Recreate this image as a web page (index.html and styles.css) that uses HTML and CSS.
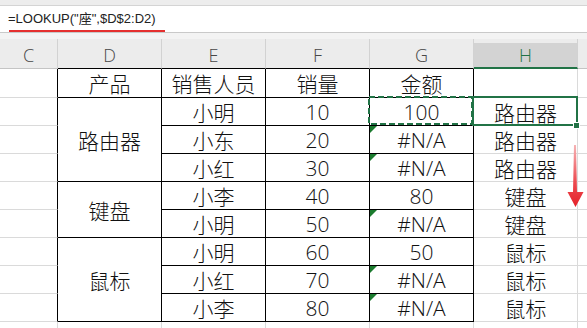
FILE: index.html
```html
<!DOCTYPE html>
<html lang="zh-CN">
<head>
<meta charset="utf-8">
<title>LOOKUP</title>
<link rel="stylesheet" href="styles.css">
</head>
<body>
<div class="app">
  <div class="topstrip"></div>
  <div class="fbar"><span class="formula">=LOOKUP("座",$D$2:D2)</span></div>
  <div class="strip"></div>
  <div class="grid colhead">
    <div class="hc">C</div>
    <div class="hc tb">D</div>
    <div class="hc tb">E</div>
    <div class="hc tb">F</div>
    <div class="hc tb">G</div>
    <div class="hc sel">H</div>
    <div class="hc last"></div>
  </div>
  <div class="grid sheet">
    <div class="c edge"></div>
    <div class="c t">产品</div>
    <div class="c t">销售人员</div>
    <div class="c t">销量</div>
    <div class="c t">金额</div>
    <div class="c"></div>
    <div class="c last"></div>

    <div class="c edge"></div>
    <div class="c t span3">路由器</div>
    <div class="c t">小明</div>
    <div class="c t">10</div>
    <div class="c t">100</div>
    <div class="c">路由器</div>
    <div class="c last"></div>

    <div class="c edge"></div>
    <div class="c t">小东</div>
    <div class="c t">20</div>
    <div class="c t err">#N/A</div>
    <div class="c">路由器</div>
    <div class="c last"></div>

    <div class="c edge"></div>
    <div class="c t">小红</div>
    <div class="c t">30</div>
    <div class="c t err">#N/A</div>
    <div class="c">路由器</div>
    <div class="c last"></div>

    <div class="c edge"></div>
    <div class="c t span2">键盘</div>
    <div class="c t">小李</div>
    <div class="c t">40</div>
    <div class="c t">80</div>
    <div class="c">键盘</div>
    <div class="c last"></div>

    <div class="c edge"></div>
    <div class="c t">小明</div>
    <div class="c t">50</div>
    <div class="c t err">#N/A</div>
    <div class="c">键盘</div>
    <div class="c last"></div>

    <div class="c edge"></div>
    <div class="c t span3">鼠标</div>
    <div class="c t">小明</div>
    <div class="c t">60</div>
    <div class="c t">50</div>
    <div class="c">鼠标</div>
    <div class="c last"></div>

    <div class="c edge"></div>
    <div class="c t">小红</div>
    <div class="c t">70</div>
    <div class="c t err">#N/A</div>
    <div class="c">鼠标</div>
    <div class="c last"></div>

    <div class="c edge"></div>
    <div class="c t">小李</div>
    <div class="c t">80</div>
    <div class="c t err">#N/A</div>
    <div class="c">鼠标</div>
    <div class="c last"></div>

    <div class="c"></div>
    <div class="c"></div>
    <div class="c"></div>
    <div class="c"></div>
    <div class="c"></div>
    <div class="c"></div>
    <div class="c last"></div>

    <svg class="marquee" width="106" height="30" viewBox="0 0 106 30">
      <rect x="1" y="1" width="103" height="27" fill="none" stroke="#217346" stroke-width="2" stroke-dasharray="6 3"/>
    </svg>
    <div class="selbox"></div>
    <div class="handle"></div>
    <svg class="arrow" width="20" height="64" viewBox="0 0 20 64">
      <defs>
        <linearGradient id="ag" x1="0" y1="0" x2="0" y2="1">
          <stop offset="0" stop-color="#f6b3b5"/>
          <stop offset="0.6" stop-color="#ec4a50"/>
          <stop offset="1" stop-color="#e5222a"/>
        </linearGradient>
      </defs>
      <polygon points="8,1 10,1 11,48 17.5,48 9.5,63 1.5,48 7,48" fill="url(#ag)"/>
    </svg>
  </div>
</div>
</body>
</html>
```

FILE: styles.css
```css
html, body {
  margin: 0;
  padding: 0;
  background: #ffffff;
}

.app {
  width: 587px;
  height: 328px;
  overflow: hidden;
  position: relative;
  font-family: "Open Sans", "Noto Sans CJK SC", sans-serif;
}

.topstrip {
  height: 5px;
  background: #ededed;
  border-bottom: 1px solid #d4d4d4;
}

.fbar {
  position: relative;
  height: 26px;
  background: #ffffff;
  border-bottom: 1px solid #c9c9c9;
}

.formula {
  display: block;
  padding-left: 8px;
  line-height: 26px;
  font-family: "Liberation Sans", "Noto Sans CJK SC", sans-serif;
  font-size: 13px;
  color: #222222;
}

.fbar::after {
  content: "";
  position: absolute;
  left: 9px;
  top: 24px;
  width: 156px;
  height: 2px;
  background: #e5302f;
}

.strip {
  height: 6px;
  background: #f3f3f3;
}

.grid {
  display: grid;
  grid-template-columns: 58px repeat(5, 104px) 9px;
}

.colhead {
  height: 30px;
  background: #ececec;
}

.hc {
  box-sizing: border-box;
  height: 30px;
  padding-top: 4px;
  line-height: 25px;
  text-align: center;
  font-family: "Open Sans", "Noto Sans", sans-serif;
  font-weight: 300;
  font-size: 18px;
  color: #474747;
  border-right: 1px solid #d2d2d2;
  border-bottom: 1px solid #c4c4c4;
}

.hc.tb {
  border-bottom-color: #000000;
}

.hc.sel {
  background: linear-gradient(#ececec 4px, #d3d3d3 4px);
  color: #217346;
  border-bottom: 2px solid #217346;
}

.hc.last {
  border-right: none;
}

.sheet {
  position: relative;
  grid-template-rows: 29px repeat(8, 28px) 28px;
}

.c {
  box-sizing: border-box;
  display: flex;
  align-items: center;
  justify-content: center;
  font-size: 21px;
  font-weight: 300;
  color: #111111;
  border-right: 1px solid #dadada;
  border-bottom: 1px solid #dadada;
}

.c.t {
  border-right-color: #000000;
  border-bottom-color: #000000;
}

.c.edge {
  border-right-color: #000000;
}

.c.last {
  border-right: none;
}

.span3 {
  grid-row: span 3;
}

.span2 {
  grid-row: span 2;
}

.err {
  position: relative;
}

.err::before {
  content: "";
  position: absolute;
  left: 0;
  top: 0;
  width: 0;
  height: 0;
  border-top: 7px solid #1b7b2e;
  border-right: 7px solid transparent;
}

.marquee {
  position: absolute;
  left: 368px;
  top: 27px;
}

.selbox {
  position: absolute;
  left: 472px;
  top: 27px;
  width: 102px;
  height: 26px;
  border: 2px solid #217346;
}

.handle {
  position: absolute;
  left: 574px;
  top: 54px;
  width: 5px;
  height: 5px;
  background: #217346;
  outline: 1px solid #ffffff;
}

.arrow {
  position: absolute;
  left: 566px;
  top: 75px;
}
```
